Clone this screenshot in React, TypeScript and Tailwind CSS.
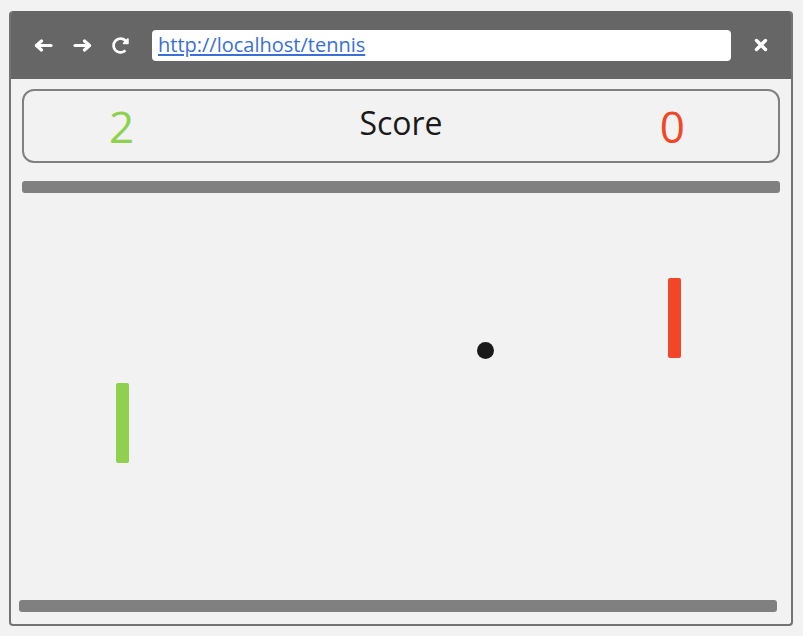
import { FaRedoAlt } from "react-icons/fa";

const font = { fontFamily: '"Open Sans", "Noto Sans", sans-serif' };

function Arrow({ flip, className }: { flip?: boolean; className?: string }) {
  return (
    <svg
      viewBox="0 0 19 13"
      className={`h-[13px] w-[19px] ${flip ? "-scale-x-100" : ""} ${className ?? ""}`}
      fill="none"
      stroke="currentColor"
      strokeWidth={3.2}
      strokeLinecap="round"
      strokeLinejoin="round"
    >
      <path d="M17 6.5H2.5" />
      <path d="M7.5 2L2.5 6.5L7.5 11" />
    </svg>
  );
}

function Paddle({ color, left, top }: { color: string; left: string; top: string }) {
  return <div className={`absolute h-[80px] w-[13px] rounded-[2px] ${color} ${left} ${top}`} />;
}

export default function App() {
  return (
    <div className="min-h-[636px] bg-[#f2f2f2] pl-[9px] pt-[11px]" style={font}>
      <div className="flex h-[615px] w-[784px] flex-col overflow-hidden rounded-[4px] border-2 border-t-0 border-[#737373] bg-[#f2f2f2]">
        {/* browser chrome */}
        <div className="-mx-[2px] flex h-[68px] shrink-0 items-center bg-[#666666] pl-[25px] pr-[25px] text-white">
          <Arrow />
          <Arrow flip className="ml-[20px]" />
          <FaRedoAlt className="ml-[20px] h-[17px] w-[17px]" />
          <div className="ml-[23px] flex h-[31px] flex-1 items-center rounded-[4px] bg-white pl-[6px]">
            <span className="text-[20px] leading-none text-[#3a6fd8] underline underline-offset-2">
              http://localhost/tennis
            </span>
          </div>
          <svg
            viewBox="0 0 14 14"
            className="ml-[23px] h-[14px] w-[14px]"
            fill="none"
            stroke="currentColor"
            strokeWidth={3.4}
            strokeLinecap="round"
          >
            <path d="M2.5 2.5L11.5 11.5M11.5 2.5L2.5 11.5" />
          </svg>
        </div>

        {/* score board */}
        <div className="mx-[11px] mt-[10px] grid h-[74px] shrink-0 grid-cols-[1fr_auto_1fr] items-center rounded-[12px] border-2 border-[#808080]">
          <div className="pl-[85px] text-[44px] leading-none text-[#8fd14f]">2</div>
          <div className="pb-[6px] text-[32px] leading-none text-[#1a1a1a]">Score</div>
          <div className="justify-self-end pr-[93px] text-[44px] leading-none text-[#f24726]">0</div>
        </div>

        {/* top wall */}
        <div className="mx-[11px] mt-[18px] h-[12px] shrink-0 rounded-[3px] bg-[#808080]" />

        {/* play field */}
        <div className="relative flex-1">
          <Paddle color="bg-[#8fd14f]" left="left-[105px]" top="top-[190px]" />
          <Paddle color="bg-[#f24726]" left="left-[657px]" top="top-[85px]" />
          <div className="absolute left-[466px] top-[149px] h-[17px] w-[17px] rounded-full bg-[#1a1a1a]" />
        </div>

        {/* bottom wall */}
        <div className="mb-[12px] ml-[8px] mr-[14px] h-[12px] shrink-0 rounded-[3px] bg-[#808080]" />
      </div>
    </div>
  );
}
